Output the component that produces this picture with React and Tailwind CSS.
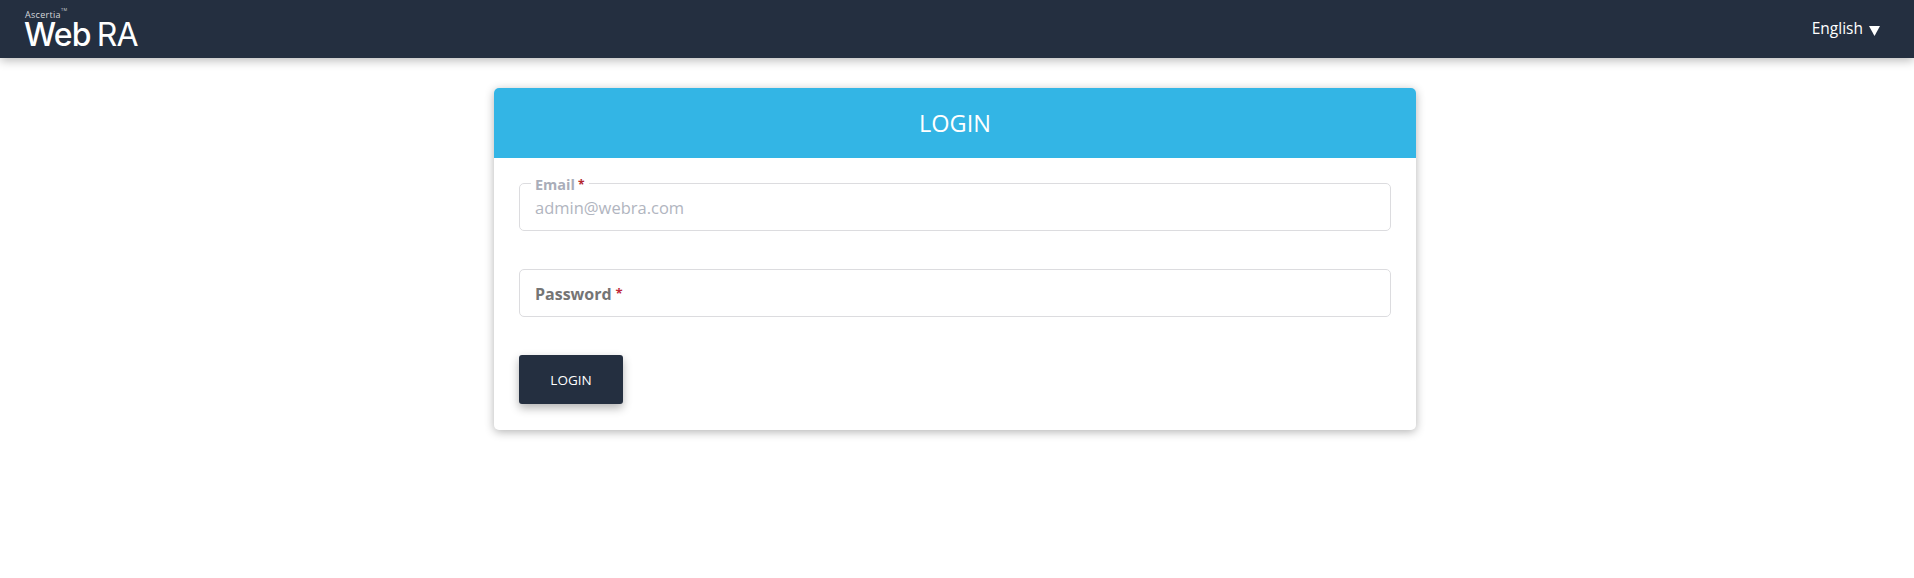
import { useState } from "react";

function Logo() {
  return (
    <div className="flex flex-col font-['Open_Sans',sans-serif] text-white select-none">
      <div className="ml-[25px] h-[9px] text-[9px] leading-[9px] tracking-[0.3px] text-[#d5d8dd]">
        Ascertia<sup className="text-[4px] leading-none align-top">TM</sup>
      </div>
      <div className="ml-[24px] mt-[2px] flex h-[28px] items-baseline font-['Inter',sans-serif] text-[32px] leading-[28px]">
        <span className="font-medium tracking-[-0.8px]">Web</span>
        <span className="ml-[6px] font-normal tracking-[-0.8px]">RA</span>
      </div>
    </div>
  );
}

function Field({ label, placeholder, floated }) {
  return (
    <div className="relative h-[48px] rounded-[5px] border border-[#dcdcdf] bg-white">
      {floated ? (
        <>
          <div className="absolute left-[11px] -top-[8px] flex items-center bg-white px-[4px] text-[14.5px] leading-[18px] font-bold text-[#a9adb9]">
            {label}
            <span className="ml-[3px] text-[12px] text-[#b3262e]">*</span>
          </div>
          <div className="pl-[15px] pt-[13px] text-[16.5px] leading-[22px] text-[#b1b5c0]">
            {placeholder}
          </div>
        </>
      ) : (
        <div className="flex h-full items-center pl-[15px] pt-[1px] text-[16px] font-bold text-[#757575]">
          {label}
          <span className="ml-[4px] text-[13px] text-[#c0283a]">*</span>
        </div>
      )}
    </div>
  );
}

export default function App() {
  const [lang] = useState("English");

  return (
    <div className="min-h-[578px] bg-white font-['Open_Sans',sans-serif]">
      <header className="flex h-[58px] items-center justify-between bg-[#242f40] pr-[34px] shadow-[0_2px_10px_rgba(0,0,0,0.3)]">
        <Logo />
        <div className="flex items-center text-[15.5px] text-white">
          {lang}
          <svg className="ml-[6px] mt-[3px]" width="11" height="10" viewBox="0 0 11 10">
            <path d="M0 0H11L5.5 10Z" fill="#fff" />
          </svg>
        </div>
      </header>

      <main className="flex justify-center pt-[30px] pr-[4px]">
        <div className="w-[922px] overflow-hidden rounded-[5px] bg-white shadow-[0_2px_10px_rgba(0,0,0,0.3)]">
          <div className="flex h-[70px] items-center justify-center bg-[#33b5e5] pt-[2px] text-[23.5px] text-white">
            LOGIN
          </div>
          <div className="px-[25px] pt-[25px] pb-[26px]">
            <Field label="Email" placeholder="admin@webra.com" floated />
            <div className="mt-[38px]">
              <Field label="Password" />
            </div>
            <button className="mt-[38px] flex h-[49px] w-[104px] items-center justify-center rounded-[3px] bg-[#242f40] pt-[1px] text-[13.5px] text-white shadow-[0_4px_10px_rgba(0,0,0,0.3)]">
              LOGIN
            </button>
          </div>
        </div>
      </main>
    </div>
  );
}
